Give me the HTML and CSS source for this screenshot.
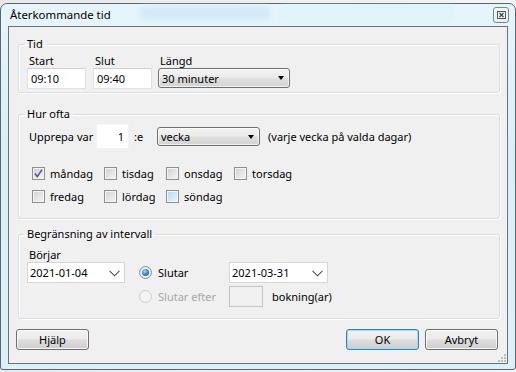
FILE: index.html
```html
<!DOCTYPE html>
<html lang="sv">
<head>
  <meta charset="UTF-8">
  <title>Återkommande tid</title>
  <link rel="stylesheet" href="styles.css">
</head>
<body>
  <div class="window">
    <div class="titlebar">
      <span class="glass glass-a"></span>
      <span class="glass glass-b"></span>
      <span class="title">Återkommande tid</span>
      <span class="close">
        <svg width="9" height="8" viewBox="0 0 9 8">
          <rect x="0.5" y="0.5" width="8" height="7" fill="none" stroke="#555" />
          <path d="M2.5 2 L6.5 6 M6.5 2 L2.5 6" stroke="#444" stroke-width="1.2" />
        </svg>
      </span>
    </div>

    <div class="client">
      <!-- Tid -->
      <fieldset class="group group-time">
        <legend>Tid</legend>
        <div class="time-row">
          <div class="field">
            <span class="label">Start</span>
            <span class="textbox time">09:10</span>
          </div>
          <div class="field field-end">
            <span class="label">Slut</span>
            <span class="textbox time">09:40</span>
          </div>
          <div class="field field-length">
            <span class="label">Längd</span>
            <span class="dropdown length">30 minuter<i class="arrow"></i></span>
          </div>
        </div>
      </fieldset>

      <!-- Hur ofta -->
      <fieldset class="group group-often">
        <legend>Hur ofta</legend>
        <div class="repeat-row">
          <span class="repeat-label">Upprepa var</span>
          <span class="textbox count">1</span>
          <span class="suffix">:e</span>
          <span class="dropdown period">vecka<i class="arrow"></i></span>
          <span class="hint">(varje vecka på valda dagar)</span>
        </div>
        <div class="days">
          <label class="day"><span class="check checked">
            <svg width="11" height="11" viewBox="0 0 11 11"><path d="M2 5.5 L4.3 8.6 L9 1.6" fill="none" stroke="#4c5f8a" stroke-width="1.6" /></svg>
          </span>måndag</label>
          <label class="day"><span class="check"></span>tisdag</label>
          <label class="day"><span class="check"></span>onsdag</label>
          <label class="day"><span class="check"></span>torsdag</label>
          <label class="day"><span class="check"></span>fredag</label>
          <label class="day"><span class="check"></span>lördag</label>
          <label class="day"><span class="check hover"></span>söndag</label>
        </div>
      </fieldset>

      <!-- Begränsning av intervall -->
      <fieldset class="group group-limit">
        <legend>Begränsning av intervall</legend>
        <div class="limit">
          <span class="label start-label">Börjar</span>
          <div class="cell">
            <span class="datebox first">2021-01-04<svg class="chev" width="11" height="7" viewBox="0 0 11 7"><path d="M0.5 0.8 L5.5 5.8 L10.5 0.8" fill="none" stroke="#505050" stroke-width="1.1" /></svg></span>
          </div>
          <div class="cell">
            <span class="radio on"><span class="dot"></span></span>
            <span>Slutar</span>
          </div>
          <div class="cell">
            <span class="datebox">2021-03-31<svg class="chev" width="11" height="7" viewBox="0 0 11 7"><path d="M0.5 0.8 L5.5 5.8 L10.5 0.8" fill="none" stroke="#505050" stroke-width="1.1" /></svg></span>
          </div>
          <div class="cell cell-after">
            <span class="radio off"></span>
            <span class="disabled">Slutar efter</span>
          </div>
          <div class="cell cell-count">
            <span class="textbox bookings"></span>
            <span>bokning(ar)</span>
          </div>
        </div>
      </fieldset>

      <div class="buttons">
        <span class="button help">Hjälp</span>
        <span class="button ok">OK</span>
        <span class="button">Avbryt</span>
      </div>

      <svg class="grip" width="9" height="9" viewBox="0 0 9 9">
        <g fill="#b9bcc0">
          <rect x="7" y="1" width="2" height="2" />
          <rect x="4" y="4" width="2" height="2" />
          <rect x="7" y="4" width="2" height="2" />
          <rect x="1" y="7" width="2" height="2" />
          <rect x="4" y="7" width="2" height="2" />
          <rect x="7" y="7" width="2" height="2" />
        </g>
      </svg>
    </div>
  </div>
</body>
</html>
```

FILE: styles.css
```css
* {
  box-sizing: border-box;
}

body {
  margin: 0;
  width: 516px;
  height: 372px;
  overflow: hidden;
  padding-top: 3px;
  font-family: "Noto Sans", "Liberation Sans", sans-serif;
  font-size: 11px;
  color: #000;
  white-space: nowrap;
  background: linear-gradient(to right, #e9e9e9, #f4f4f4);
}

.window {
  width: 516px;
  height: 367px;
  display: flex;
  flex-direction: column;
  padding: 0 7px 5px 7px;
  border: 1px solid #5d666e;
  border-radius: 7px 7px 3px 3px;
  background: linear-gradient(to bottom, #e6f5fb, #d9eff8 40%, #dcf0f8);
}

.titlebar {
  position: relative;
  height: 22px;
  display: flex;
  align-items: flex-start;
}

.glass {
  position: absolute;
  top: 2px;
  height: 14px;
  border-radius: 4px;
  filter: blur(2px);
}

.glass-a {
  left: 132px;
  width: 130px;
  background: #d4ebf7;
}

.glass-b {
  left: 272px;
  width: 172px;
  border: 1px solid #cdeefa;
  background: #e2f4fb;
}

.title {
  position: relative;
  margin: 4px 0 0 2px;
  line-height: 14px;
  font-size: 11.4px;
}

.close {
  position: relative;
  margin: 3px -1px 0 auto;
  width: 16px;
  height: 16px;
  display: flex;
  align-items: center;
  justify-content: center;
  border: 1px solid #7c848c;
  border-radius: 3px;
  background: linear-gradient(to bottom, #f7fbfd, #e3eff5);
}

.client {
  position: relative;
  flex: 1;
  display: flex;
  flex-direction: column;
  padding: 10px 7px 12px 9px;
  background: #f0f0f0;
  border: 1px solid #6b737a;
}

.group {
  margin: 0;
  padding: 3px 8px 2px 8px;
  border: 1px solid #d5dfe5;
  border-radius: 3px;
  box-shadow: inset 1px 1px 0 #fff, 1px 1px 0 #fff;
}

.group legend {
  margin-left: -3px;
  padding: 0 3px;
  line-height: 14px;
}

.label {
  display: block;
  padding-left: 2px;
  line-height: 14px;
}

.textbox {
  display: flex;
  align-items: center;
  height: 21px;
  padding: 0 3px;
  background: #fff;
  border: 1px solid #dfe1e6;
  border-top-color: #cdd0d6;
}

.time-row {
  display: flex;
}

.time {
  width: 59px;
}

.field-end {
  margin-left: 7px;
}

.field-length {
  margin-left: 6px;
}

.dropdown {
  position: relative;
  display: flex;
  align-items: center;
  height: 20px;
  padding-left: 3px;
  border: 1px solid #707070;
  border-radius: 3px;
  background: linear-gradient(to bottom, #f3f3f3, #ececec 45%, #dedede 55%, #d3d3d3);
  box-shadow: inset 0 0 0 1px rgba(255, 255, 255, 0.7);
}

.dropdown .arrow {
  position: absolute;
  right: 5px;
  top: 7px;
  border-left: 3.5px solid transparent;
  border-right: 3.5px solid transparent;
  border-top: 4px solid #000;
}

.length {
  width: 132px;
}

.repeat-row {
  display: flex;
  align-items: center;
  height: 25px;
}

.repeat-label {
  margin-left: 2px;
  width: 67px;
}

.count {
  width: 33px;
  height: 25px;
  justify-content: flex-end;
  padding-right: 4px;
  border-color: #f4f4f4;
}

.suffix {
  margin-left: 5px;
  width: 18px;
}

.period {
  margin-left: 5px;
  width: 103px;
  height: 19px;
}

.hint {
  margin-left: 8px;
}

.days {
  display: grid;
  grid-template-columns: 72px 62px 68px auto;
  row-gap: 7px;
  margin: 16px 0 0 5px;
}

.day {
  display: flex;
  align-items: center;
  gap: 5px;
  height: 16px;
}

.check {
  width: 13px;
  height: 13px;
  display: flex;
  align-items: center;
  justify-content: center;
  border: 1px solid #8e8f8f;
  background: linear-gradient(135deg, #cdd0d4, #f6f6f6);
  box-shadow: inset 0 0 0 1px #f4f4f4;
}

.check.hover {
  background: linear-gradient(135deg, #b3daf3, #eaf6fd);
  box-shadow: inset 0 0 0 1px #eef7fd;
}

.limit {
  display: grid;
  grid-template-columns: 98px 76px 99px auto;
  grid-template-rows: 14px 24px 21px;
  column-gap: 14px;
  margin-top: 4px;
}

.start-label {
  grid-column: 1 / 5;
}

.cell {
  display: flex;
  align-items: center;
  gap: 6px;
  height: 21px;
}

.cell-after {
  grid-column: 2;
}

.cell-count {
  grid-column: 3 / 5;
  gap: 9px;
}

.datebox {
  position: relative;
  display: flex;
  align-items: center;
  width: 99px;
  height: 21px;
  padding-left: 2px;
  background: #fff;
  border: 1px solid #d6d6d6;
}

.datebox.first {
  width: 98px;
}

.chev {
  position: absolute;
  right: 4px;
  top: 7px;
}

.radio {
  flex: none;
  width: 13px;
  height: 13px;
  border-radius: 50%;
  display: flex;
  align-items: center;
  justify-content: center;
}

.radio.on {
  border: 1px solid #8e8f8f;
  background: radial-gradient(circle, #fff, #e2e2e2);
}

.radio .dot {
  width: 7px;
  height: 7px;
  border-radius: 50%;
  background: radial-gradient(circle at 40% 35%, #9fdcff, #2a7fce 55%, #164e8e);
}

.radio.off {
  border: 1px solid #cdcdcd;
  background: #f4f4f4;
}

.disabled {
  color: #a6a6a6;
}

.bookings {
  width: 34px;
  height: 21px;
  background: #f0f0f0;
  border: 1px solid #c4c4c4;
}

.group-time {
  height: 56px;
}

.group-often {
  margin-top: 14px;
  height: 112px;
}

.group-limit {
  margin-top: 8px;
  height: 92px;
}

.buttons {
  display: flex;
  gap: 6px;
  margin: 10px 2px 0 -2px;
}

.button {
  width: 73px;
  height: 21px;
  display: flex;
  align-items: center;
  justify-content: center;
  border: 1px solid #707070;
  border-radius: 3px;
  background: linear-gradient(to bottom, #f2f2f2, #ebebeb 48%, #dddddd 52%, #cfcfcf);
  box-shadow: inset 0 0 0 1px rgba(255, 255, 255, 0.75);
}

.help {
  margin-right: auto;
}

.ok {
  border-color: #3c7fb1;
  box-shadow: inset 0 0 0 1px #9fdcf5;
}

.grip {
  position: absolute;
  right: 1px;
  bottom: 1px;
}
```
